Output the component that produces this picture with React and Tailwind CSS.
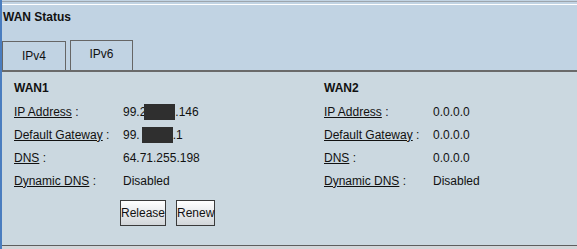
const Redact = ({ w, className = '' }) => (
  <span className={`inline-block h-[16px] bg-[#2f2f2f] align-middle ${className}`} style={{ width: w }} />
)

const wan1 = [
  {
    label: 'IP Address',
    value: (
      <span className="flex items-center">
        99.2<Redact w={31} className="-ml-[2px]" />.146
      </span>
    ),
  },
  {
    label: 'Default Gateway',
    value: (
      <span className="flex items-center">
        99.<Redact w={31} className="ml-[2px] h-[14px]" />.1
      </span>
    ),
  },
  { label: 'DNS', value: '64.71.255.198' },
  { label: 'Dynamic DNS', value: 'Disabled' },
]

const wan2 = [
  { label: 'IP Address', value: '0.0.0.0' },
  { label: 'Default Gateway', value: '0.0.0.0' },
  { label: 'DNS', value: '0.0.0.0' },
  { label: 'Dynamic DNS', value: 'Disabled' },
]

function Row({ label, value }) {
  return (
    <div className="flex h-[23px] items-center">
      <div className="w-[109px] shrink-0">
        <span className="underline underline-offset-1">{label}</span> :
      </div>
      <div>{value}</div>
    </div>
  )
}

function Column({ title, rows, children }) {
  return (
    <div className="flex flex-col">
      <div className="flex h-[24px] items-center font-bold">{title}</div>
      {rows.map((r) => (
        <Row key={r.label} label={r.label} value={r.value} />
      ))}
      {children}
    </div>
  )
}

function Button({ children }) {
  return (
    <button className="h-[26px] border border-[#3a3a3a] bg-gradient-to-b from-[#ffffff] to-[#d2d6da] px-0 text-[12px] leading-none text-[#111]">
      {children}
    </button>
  )
}

export default function App() {
  return (
    <div className="flex h-[249px] w-[577px] flex-col overflow-hidden border-l-2 border-[#4a7dbf] bg-[#c1d3e3] font-['Liberation_Sans',Arial,sans-serif] text-[12px] text-[#111]">
      <div className="mt-[1px] h-[1px] bg-[#9da5ad]" />
      <div className="mt-[2px] h-[1px] bg-white" />
      <div className="flex h-[24px] items-center pl-[1px] text-[12px] font-bold">WAN Status</div>

      <div className="mt-[11px] flex items-end gap-[4px]">
        <div className="flex h-[29px] w-[64px] items-start justify-center border border-b-0 border-[#666] pt-[5px]">IPv4</div>
        <div className="flex h-[30px] w-[63px] items-start justify-center border border-b-0 border-[#666] pt-[4px]">IPv6</div>
      </div>

      <div className="flex h-[176px] border-t-2 border-b border-t-[#6a6a6a] border-b-[#5e5e5e] bg-[#cbd8e0] pl-[12px] pt-[4px]">
        <div className="w-[310px]">
          <Column title="WAN1" rows={wan1}>
            <div className="ml-[106px] mt-[8px] flex gap-[10px]">
              <Button>Release</Button>
              <Button>Renew</Button>
            </div>
          </Column>
        </div>
        <Column title="WAN2" rows={wan2} />
      </div>
      <div className="flex-1 bg-[#d3d6d9]" />
    </div>
  )
}
